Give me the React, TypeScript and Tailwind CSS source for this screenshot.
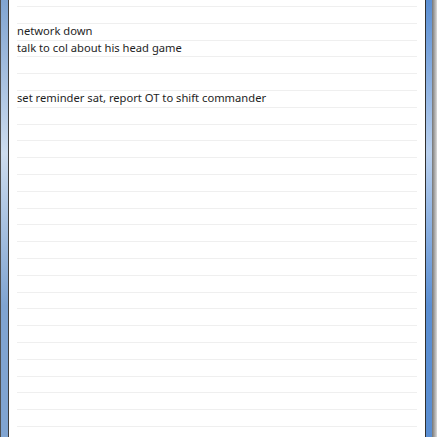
import React from "react";

const rows: string[] = [
  "",
  "network down",
  "talk to col about his head game",
  "",
  "",
  "set reminder sat, report OT to shift commander",
  ...Array.from({ length: 21 }, () => ""),
];

export default function App() {
  return (
    <div className="flex h-[437px] w-[437px] overflow-hidden bg-white">
      <div className="w-px bg-[#505050]" />
      <div className="w-[7px] bg-linear-to-b from-[#80a4d1] from-0% via-[#cddcee] via-35% to-[#80a4d1] to-70%" />
      <div className="w-px bg-[#3c3c3c]" />
      <div className="flex-1 overflow-hidden bg-white px-2">
        <div className="h-[7px] border-b border-[#efefef]" />
        {rows.map((t, i) => (
          <div
            key={i}
            className="flex h-[16.8px] items-center border-b border-[#efefef] font-['Noto_Sans',sans-serif] text-[11.2px] text-[#1e1e1e] whitespace-nowrap"
          >
            {t}
          </div>
        ))}
      </div>
      <div className="w-px bg-[#303030]" />
      <div className="w-[6px] bg-linear-to-b from-[#5a8ed2] from-0% via-[#b9d0ee] via-35% to-[#5a8ed2] to-70%" />
      <div className="w-[5px] bg-linear-to-r from-[#767676] to-[#dadada]" />
    </div>
  );
}
